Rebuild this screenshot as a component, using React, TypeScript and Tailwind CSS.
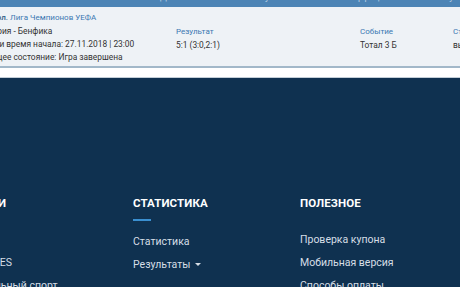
import React from 'react';

const headCells = [
  { label: 'Событие', w: 'w-[160px]', pl: 'pl-[16px]' },
  { label: 'Дата', w: 'w-[90px]', pl: '' },
  { label: 'Результат', w: 'w-[90px]', pl: '' },
  { label: 'Коэффициент', w: 'w-[90px]', pl: '' },
  { label: 'Статус', w: 'w-[40px]', pl: '' },
];

function FooterCol({
  title,
  items,
  width,
}: {
  title: string;
  items: { label: string; caret?: boolean }[];
  width: string;
}) {
  return (
    <div className={`${width} shrink-0 flex flex-col`}>
      <h4 className="text-[11.5px] leading-[14px] font-bold text-white tracking-[0.1px] whitespace-nowrap">
        {title}
      </h4>
      <div className="mt-[9px] w-[18px] h-[2px] bg-[#3a8fd0]" />
      <ul className="mt-[14px] flex flex-col gap-[10px]">
        {items.map((it) => (
          <li
            key={it.label}
            className="text-[10.5px] leading-[13px] text-[#d6dee6] whitespace-nowrap flex items-center gap-[5px]"
          >
            {it.label}
            {it.caret && (
              <span className="inline-block w-0 h-0 border-l-[3px] border-r-[3px] border-t-[3px] border-l-transparent border-r-transparent border-t-[#d6dee6]" />
            )}
          </li>
        ))}
      </ul>
    </div>
  );
}

export default function App() {
  return (
    <div className="w-[460px] h-[287px] overflow-hidden bg-white flex flex-col font-['Roboto',sans-serif]">
      {/* table header, mostly scrolled off */}
      <div className="h-[7px] shrink-0 bg-[#4c84b5] overflow-hidden flex">
        {headCells.map((c) => (
          <div
            key={c.label}
            className={`${c.w} ${c.pl} shrink-0 -mt-[8px] text-[9px] leading-[10px] text-[#b9cfe3] whitespace-nowrap`}
          >
            {c.label}
          </div>
        ))}
      </div>

      {/* coupon row */}
      <div className="h-[61px] shrink-0 bg-[#eef2f6] border-b-2 border-[#a2b8c9] flex pt-[4px] overflow-hidden">
        <div className="-ml-[22px] w-[198px] shrink-0 flex flex-col text-[8.4px] leading-[13px] text-[#333] whitespace-nowrap">
          <div className="text-[8px] leading-[14px]">
            <span className="text-[#2f5d86] font-medium">Футбол.</span>{' '}
            <span className="text-[#3b78b2]">Лига Чемпионов УЕФА</span>
          </div>
          <div>Бавария - Бенфика</div>
          <div>Дата и время начала: 27.11.2018 | 23:00</div>
          <div>Текущее состояние: Игра завершена</div>
        </div>
        <div className="w-[184px] shrink-0 flex flex-col pt-[14px] leading-[13px] whitespace-nowrap">
          <div className="text-[8px] text-[#3b78b2] leading-[14px]">Результат</div>
          <div className="text-[8.4px] text-[#333]">5:1 (3:0,2:1)</div>
        </div>
        <div className="w-[93px] shrink-0 flex flex-col pt-[14px] leading-[13px] whitespace-nowrap">
          <div className="text-[8px] text-[#3b78b2] leading-[14px]">Событие</div>
          <div className="text-[8.4px] text-[#333]">Тотал 3 Б</div>
        </div>
        <div className="shrink-0 flex flex-col pt-[14px] leading-[13px] whitespace-nowrap">
          <div className="text-[8px] text-[#3b78b2] leading-[14px]">Статус</div>
          <div className="text-[8.4px] text-[#333]">выигрыш</div>
        </div>
      </div>

      <div className="h-[10px] shrink-0 bg-white border-b border-[#c3ced8]" />

      {/* footer */}
      <footer className="flex-1 bg-[#0f3150] pt-[118px] flex overflow-hidden">
        <div className="-ml-[39px] flex">
          <FooterCol
            width="w-[172px]"
            title="СТАВКИ"
            items={[{ label: 'Live' }, { label: 'TV GAMES' }, { label: 'Виртуальный спорт' }]}
          />
          <FooterCol
            width="w-[167px]"
            title="СТАТИСТИКА"
            items={[{ label: 'Статистика' }, { label: 'Результаты', caret: true }]}
          />
          <FooterCol
            width="w-[160px]"
            title="ПОЛЕЗНОЕ"
            items={[
              { label: 'Проверка купона' },
              { label: 'Мобильная версия' },
              { label: 'Способы оплаты' },
            ]}
          />
        </div>
      </footer>
    </div>
  );
}
